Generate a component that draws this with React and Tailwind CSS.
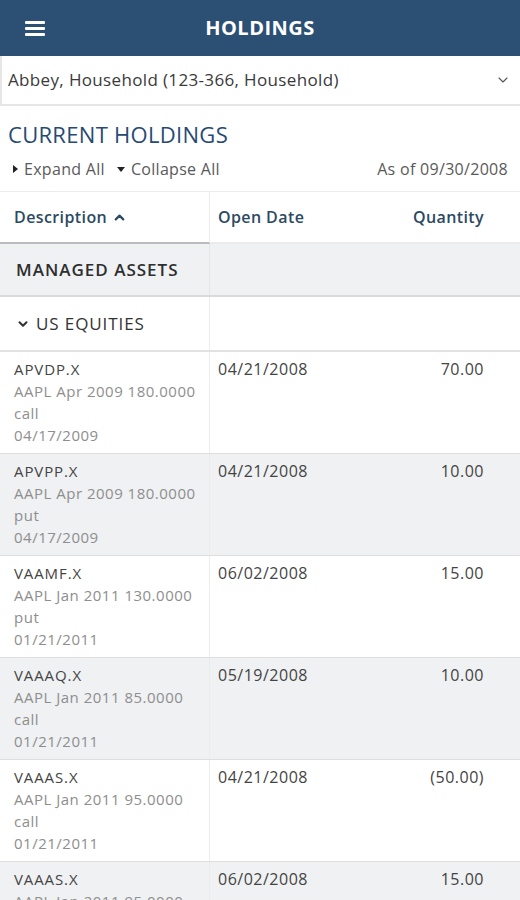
import { ChevronDown, ChevronUp } from 'lucide-react'

const rows = [
  ['APVDP.X', 'AAPL Apr 2009 180.0000', 'call', '04/17/2009', '04/21/2008', '70.00'],
  ['APVPP.X', 'AAPL Apr 2009 180.0000', 'put', '04/17/2009', '04/21/2008', '10.00'],
  ['VAAMF.X', 'AAPL Jan 2011 130.0000', 'put', '01/21/2011', '06/02/2008', '15.00'],
  ['VAAAQ.X', 'AAPL Jan 2011 85.0000', 'call', '01/21/2011', '05/19/2008', '10.00'],
  ['VAAAS.X', 'AAPL Jan 2011 95.0000', 'call', '01/21/2011', '04/21/2008', '(50.00)'],
  ['VAAAS.X', 'AAPL Jan 2011 95.0000', 'call', '01/21/2011', '06/02/2008', '15.00'],
]

export default function App(){
  return (
    <div className="w-[520px] h-[900px] overflow-hidden bg-white font-['Open_Sans',sans-serif]">
      <header className="h-14 bg-[#2b5074] flex items-center relative">
        <svg width="20" height="16" viewBox="0 0 20 16" className="absolute left-[25px] top-[20px]">
          <rect x="0" y="1" width="20" height="3" rx="1" fill="#fff"/>
          <rect x="0" y="7" width="20" height="3" rx="1" fill="#fff"/>
          <rect x="0" y="13" width="20" height="3" rx="1" fill="#fff"/>
        </svg>
        <h1 className="w-full text-center text-white text-[20px] font-bold tracking-[0.5px]">HOLDINGS</h1>
      </header>

      <div className="h-[50px] border-l-2 border-b-2 border-[#e6e6e6] flex items-center justify-between pl-[6px] pr-[9px]">
        <span className="text-[17px] tracking-[0.35px] text-[#3a3a3a]">Abbey, Household (123-366, Household)</span>
        <ChevronDown size={16} strokeWidth={1.6} className="text-[#555]"/>
      </div>

      <div className="px-2 pt-[14px]">
        <h2 className="text-[22px] tracking-[0.3px] text-[#274a72] leading-7">CURRENT HOLDINGS</h2>
        <div className="flex items-center justify-between text-[16px] tracking-[0.3px] text-[#5a5a5a] mt-[11px] h-5">
          <div className="flex items-center gap-3">
            <span className="flex items-center gap-[6px] pl-[5px]"><span className="w-0 h-0 border-y-[4px] border-y-transparent border-l-[5px] border-l-[#222]"></span>Expand All</span>
            <span className="flex items-center gap-[6px]"><span className="w-0 h-0 border-x-[4px] border-x-transparent border-t-[5px] border-t-[#222]"></span>Collapse All</span>
          </div>
          <span className="pr-[4px]">As of 09/30/2008</span>
        </div>
      </div>

      <div className="mt-[12px] border-t border-[#ececec]">
        <div className="grid grid-cols-[210px_1fr_1fr] h-[52px] text-[16px] tracking-[0.4px] font-semibold text-[#2c4a62]">
          <div className="flex items-center gap-[5px] pl-[14px] border-r border-[#ececec] border-b-2 border-b-[#b8bcc0]">Description <ChevronUp size={15} strokeWidth={3.5}/></div>
          <div className="flex items-center pl-2 border-b-2 border-b-[#ececec]">Open Date</div>
          <div className="flex items-center justify-end pr-9 border-b-2 border-b-[#ececec]">Quantity</div>
        </div>

        <div className="grid grid-cols-[210px_1fr] h-[53px] bg-[#eff1f3] border-b-2 border-[#d8dadc]">
          <div className="flex items-center pl-4 text-[17px] tracking-[1px] font-semibold text-[#2e2e2e] border-r border-[#e4e6e8]">MANAGED ASSETS</div>
          <div></div>
        </div>

        <div className="grid grid-cols-[210px_1fr] h-[55px] border-b-2 border-[#e2e2e2]">
          <div className="flex items-center gap-[6px] pl-4 text-[17px] tracking-[0.9px] font-medium text-[#333] border-r border-[#ececec]">
            <ChevronDown size={14} strokeWidth={3.5}/>US EQUITIES
          </div>
          <div></div>
        </div>

        {rows.map((r, i) => (
          <div key={i} className={`grid grid-cols-[210px_1fr_1fr] h-[102px] border-b border-[#dedede] ${i % 2 ? 'bg-[#eff1f3]' : 'bg-white'}`}>
            <div className="pl-[14px] pt-[6px] leading-[22px] border-r border-[#ececec]">
              <div className="text-[15px] tracking-[0.9px] text-[#444]">{r[0]}</div>
              <div className="text-[15px] tracking-[0.5px] text-[#8e8e8e]">{r[1]}</div>
              <div className="text-[15px] tracking-[0.5px] text-[#8e8e8e]">{r[2]}</div>
              <div className="text-[15px] tracking-[0.5px] text-[#8e8e8e]">{r[3]}</div>
            </div>
            <div className="pl-2 pt-[6px] leading-[22px] text-[16px] tracking-[0.5px] text-[#444]">{r[4]}</div>
            <div className="pr-9 pt-[6px] leading-[22px] text-[16px] tracking-[0.5px] text-[#444] text-right">{r[5]}</div>
          </div>
        ))}
      </div>
    </div>
  )
}
